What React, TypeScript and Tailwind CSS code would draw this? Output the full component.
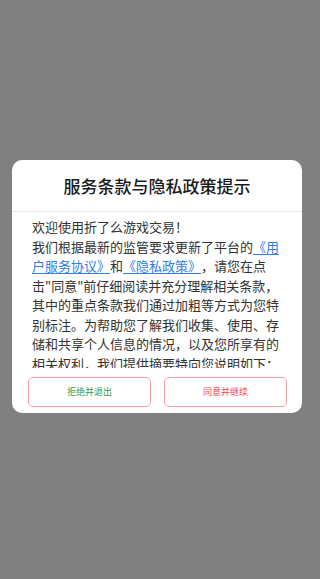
import React from "react";

export default function App() {
  return (
    <div
      className="w-[320px] h-[579px] bg-[#808080] pt-[160px] [text-spacing-trim:space-all]"
      style={{ fontFamily: '"Noto Sans CJK SC", "Noto Sans", sans-serif' }}
    >
      <div className="ml-[12px] w-[290px] bg-white rounded-[10px] overflow-hidden">
        <div className="h-[52px] flex items-center justify-center border-b border-[#e4e9f0] text-[17px] font-medium text-[#1a1a1a]">
          服务条款与隐私政策提示
        </div>
        <div className="h-[156px] overflow-hidden px-5 pt-[5px] text-[13px] leading-[19.5px] text-[#333333]">
          <p>欢迎使用折了么游戏交易！</p>
          <p>
            我们根据最新的监管要求更新了平台的
            <span className="text-[#2f80e6] underline underline-offset-2">《用户服务协议》</span>
            和
            <span className="text-[#2f80e6] underline underline-offset-2">《隐私政策》</span>
            ，请您在点击"同意"前仔细阅读并充分理解相关条款，其中的重点条款我们通过加粗等方式为您特别标注。为帮助您了解我们收集、使用、存储和共享个人信息的情况，以及您所享有的相关权利，我们提供摘要特向您说明如下：
          </p>
        </div>
        <div className="flex gap-[13px] pl-4 pr-[15px] pt-[9px] pb-[6px]">
          <button className="flex-1 h-[30px] rounded-[5px] border border-[#f5a0ab] bg-white text-[9px] text-[#2f9a52] flex items-center justify-center">
            拒绝并退出
          </button>
          <button className="flex-1 h-[30px] rounded-[5px] border border-[#f5a0ab] bg-white text-[9px] text-[#f0445a] flex items-center justify-center">
            同意并继续
          </button>
        </div>
      </div>
    </div>
  );
}
